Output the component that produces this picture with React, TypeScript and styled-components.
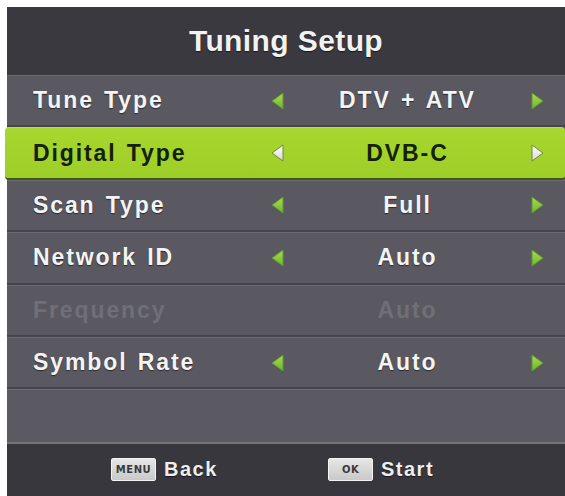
import React from "react";
import styled, { createGlobalStyle } from "styled-components";

const Global = createGlobalStyle`
  html, body { margin: 0; padding: 0; background: #ffffff; }
  body { font-family: "Liberation Sans", Arial, sans-serif; }
  * { box-sizing: border-box; }
`;

const Panel = styled.div`
  margin: 7px 0 0 7px;
  width: 558px;
  height: 489px;
  background: #5a5961;
  display: flex;
  flex-direction: column;
  font-family: "Liberation Sans", Arial, sans-serif;
  font-weight: 700;
`;

const Header = styled.div`
  height: 68px;
  flex: none;
  background: #3a393f;
  display: flex;
  align-items: center;
  justify-content: center;
  color: #f2f2f2;
  font-size: 30px;
  letter-spacing: 0.4px;
  text-shadow: 0 1px 1px rgba(0, 0, 0, 0.6);
`;

const List = styled.div`
  display: flex;
  flex-direction: column;
  flex: none;
`;

const Row = styled.div<{ $active?: boolean }>`
  height: 52.4px;
  display: grid;
  grid-template-columns: 237px 16px 1fr 16px;
  align-items: center;
  padding: 0 20px 0 ${(p) => (p.$active ? "28px" : "26px")};
  background: ${(p) =>
    p.$active ? "linear-gradient(#a8d82f, #9dcd27)" : "#5a5961"};
  border-top: 1px solid
    ${(p) => (p.$active ? "#b9e04a" : "rgba(255, 255, 255, 0.1)")};
  border-bottom: 2px solid
    ${(p) => (p.$active ? "#3f5a12" : "rgba(0, 0, 0, 0.22)")};
  border-radius: ${(p) => (p.$active ? "4px" : "0")};
  margin-left: ${(p) => (p.$active ? "-2px" : "0")};
  font-size: 23px;
  letter-spacing: 1.9px;
  word-spacing: 2px;
`;

const Label = styled.span<{ $tone: "normal" | "active" | "disabled" }>`
  color: ${(p) =>
    p.$tone === "active" ? "#142108" : p.$tone === "disabled" ? "#706f77" : "#f4f4f4"};
  text-shadow: ${(p) =>
    p.$tone === "normal" ? "0 1px 1px rgba(0,0,0,0.55)" : "none"};
  white-space: nowrap;
`;

const Value = styled(Label)`
  text-align: center;
`;

const ArrowBox = styled.span`
  display: flex;
  align-items: center;
  justify-content: center;
  height: 18px;
`;

const Empty = styled.div`
  height: 52.4px;
  background: #5b5a62;
  border-top: 1px solid rgba(255, 255, 255, 0.1);
`;

const Footer = styled.div`
  flex: 1;
  background: #38373d;
  border-top: 2px solid #757479;
  display: flex;
  align-items: center;
  padding-left: 104px;
`;

const Hint = styled.div<{ $width: number }>`
  display: flex;
  align-items: center;
  gap: 8px;
  width: ${(p) => p.$width}px;
  color: #eeeeee;
  font-size: 20px;
  letter-spacing: 1.5px;
  text-shadow: 0 1px 1px rgba(0, 0, 0, 0.6);
`;

const Key = styled.span`
  display: inline-flex;
  align-items: center;
  justify-content: center;
  width: 45px;
  height: 23px;
  border-radius: 2px;
  background: linear-gradient(#e6e6e6, #c9c9c9);
  border: 1px solid #f4f4f4;
  color: #3a3a3a;
  font-size: 10px;
  letter-spacing: 0.5px;
  text-shadow: none;
  font-family: "DejaVu Sans", sans-serif;
  font-weight: 700;
`;

const Arrow = ({ dir, active }: { dir: "left" | "right"; active?: boolean }) => {
  const pts = dir === "left" ? "13,1 13,17 2,9" : "3,1 3,17 14,9";
  const id = `g-${dir}-${active ? "a" : "n"}`;
  return (
    <svg width="16" height="18" viewBox="0 0 16 18">
      <defs>
        <linearGradient id={id} x1="0" y1="0" x2="0" y2="1">
          {active ? (
            <>
              <stop offset="0" stopColor="#ffffff" />
              <stop offset="1" stopColor="#d9d9d9" />
            </>
          ) : (
            <>
              <stop offset="0" stopColor="#a9dc52" />
              <stop offset="1" stopColor="#6fb52f" />
            </>
          )}
        </linearGradient>
      </defs>
      <polygon
        points={pts}
        fill={`url(#${id})`}
        stroke={active ? "#6f8a3a" : "#5d9a2a"}
        strokeWidth="1"
        strokeLinejoin="round"
      />
    </svg>
  );
};

type Item = { label: string; value: string; active?: boolean; disabled?: boolean };

const items: Item[] = [
  { label: "Tune Type", value: "DTV + ATV" },
  { label: "Digital Type", value: "DVB-C", active: true },
  { label: "Scan Type", value: "Full" },
  { label: "Network ID", value: "Auto" },
  { label: "Frequency", value: "Auto", disabled: true },
  { label: "Symbol Rate", value: "Auto" },
];

export default function App() {
  return (
    <>
      <Global />
      <Panel>
        <Header>Tuning Setup</Header>
        <List>
          {items.map((it) => {
            const tone = it.active ? "active" : it.disabled ? "disabled" : "normal";
            return (
              <Row key={it.label} $active={it.active}>
                <Label $tone={tone}>{it.label}</Label>
                <ArrowBox>{!it.disabled && <Arrow dir="left" active={it.active} />}</ArrowBox>
                <Value $tone={tone}>{it.value}</Value>
                <ArrowBox>{!it.disabled && <Arrow dir="right" active={it.active} />}</ArrowBox>
              </Row>
            );
          })}
          <Empty />
        </List>
        <Footer>
          <Hint $width={217}>
            <Key>MENU</Key>
            Back
          </Hint>
          <Hint $width={150}>
            <Key>OK</Key>
            Start
          </Hint>
        </Footer>
      </Panel>
    </>
  );
}
